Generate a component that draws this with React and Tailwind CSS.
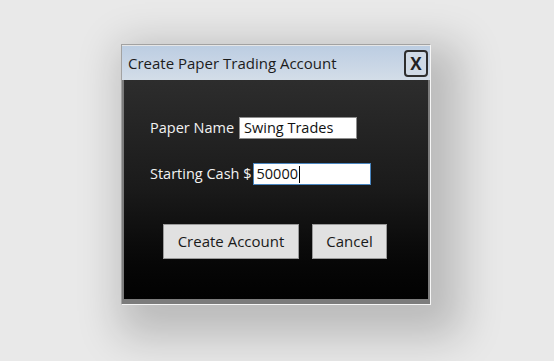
export default function App() {
  return (
    <div className="h-[361px] w-[554px] overflow-hidden bg-[#e9e9e9] pl-[121px] pt-[44px] font-['Open_Sans',sans-serif]">
      <Dialog />
    </div>
  )
}

function Dialog() {
  return (
    <div className="flex h-[261px] w-[310px] flex-col border border-t-[#a2a2a2] border-l-[#a2a2a2] border-r-[#f6f6f6] border-b-[#f6f6f6] bg-[#7c7c7c] px-[2px] pb-[5px] shadow-[14px_16px_40px_16px_rgba(0,0,0,0.2)]">
      <div className="-mx-[2px] flex h-[35px] shrink-0 items-center justify-between border-t border-[#e6e6e6] bg-gradient-to-b from-[#bccde2] to-[#d3dde8] pl-[6px] pr-[2px]">
        <span className="text-[15px] leading-none text-[#1c1c1c]">Create Paper Trading Account</span>
        <button className="flex h-[27px] w-[24px] items-center justify-center rounded-[4px] border-2 border-[#2e2e2e] bg-[#d0dae6] text-[17px] font-bold leading-none text-[#222]">X</button>
      </div>
      <div className="flex flex-1 flex-col bg-gradient-to-b from-[#2d2d2d] via-[#1a1a1a] to-[#020202] pl-[26px] pt-[37px]">
        <div className="flex h-[22px] items-center gap-[5px]">
          <span className="text-[14.5px] text-[#f2f2f2]">Paper Name</span>
          <div className="flex h-[22px] w-[118px] items-center border border-[#8d8d8d] bg-white px-[4px] text-[14.5px] text-[#111]">Swing Trades</div>
        </div>
        <div className="mt-[24px] flex h-[22px] items-center gap-[1px]">
          <span className="text-[14.5px] text-[#f2f2f2]">Starting Cash $</span>
          <div className="flex h-[22px] w-[118px] items-center border border-[#4a86c0] bg-white px-[3px] text-[14.5px] text-[#111]">
            50000<span className="ml-px h-[17px] w-px bg-black" />
          </div>
        </div>
        <div className="mt-[39px] flex gap-[13px] pl-[13px]">
          <button className="h-[35px] w-[136px] border border-[#9a9a9a] bg-[#e1e1e1] text-[15px] text-[#1a1a1a]">Create Account</button>
          <button className="h-[35px] w-[75px] border border-[#9a9a9a] bg-[#e1e1e1] text-[15px] text-[#1a1a1a]">Cancel</button>
        </div>
      </div>
    </div>
  )
}
